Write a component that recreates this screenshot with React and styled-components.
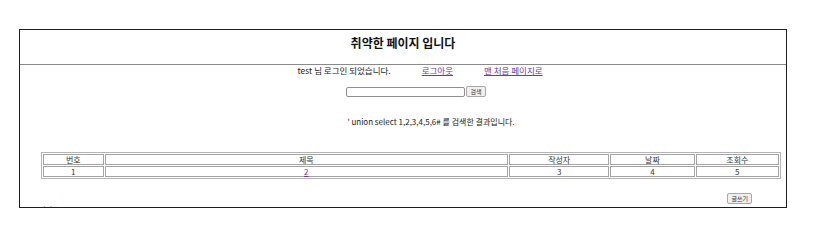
import styled, { createGlobalStyle } from 'styled-components';

const GlobalStyle = createGlobalStyle`
  body {
    margin: 0;
    background: #fff;
    font-family: 'Noto Sans CJK KR', 'Noto Sans', sans-serif;
    color: #222;
  }
`;

const Page = styled.div`
  padding: 29px 0 0 19px;
  height: 241px;
  box-sizing: border-box;
`;

const Frame = styled.div`
  width: 768px;
  height: 179px;
  box-sizing: border-box;
  border: 1px solid #1e1e1e;
  overflow: hidden;
`;

const Header = styled.div`
  height: 35px;
  box-sizing: border-box;
  border-bottom: 1px solid #8a8a8a;
  display: flex;
  justify-content: center;
  padding-top: 5px;
`;

const Title = styled.h1`
  margin: 0;
  font-size: 12px;
  font-weight: 700;
  line-height: 16px;
  color: #111;
`;

const LoginBar = styled.div`
  display: flex;
  justify-content: center;
  gap: 31px;
  margin-top: 0;
  font-size: 8.5px;
  line-height: 10px;
  padding-left: 34px;
`;

const Link = styled.a`
  color: #6a3c9e;
  text-decoration: underline;
`;

const SearchRow = styled.form`
  display: flex;
  justify-content: center;
  align-items: center;
  margin-top: 11px;
  padding-left: 26px;
`;

const SearchInput = styled.input`
  width: 119px;
  height: 10px;
  box-sizing: border-box;
  border: 1px solid #8f8f8f;
  border-radius: 2px;
  padding: 0;
  margin: 0;
`;

const SmallButton = styled.button`
  font-family: inherit;
  font-size: 6px;
  line-height: 9px;
  height: 11px;
  padding: 0 3px;
  margin: 0 0 0 1px;
  border: 1px solid #a8a8a8;
  border-radius: 2px;
  background: #efefef;
  color: #333;
`;

const Result = styled.p`
  margin: 20px 0 0;
  text-align: center;
  font-size: 8px;
  line-height: 10px;
  padding-left: 56px;
`;

const BoardTable = styled.table`
  margin: 25px 0 0 21px;
  width: 740px;
  border: 1px solid #b4b4b4;
  border-spacing: 1px;
  font-size: 8px;
  line-height: 9px;
`;

const Cell = styled.td`
  border: 1px solid #a4a4a4;
  text-align: center;
  padding: 0;
  width: ${(p) => p.$w}px;
  color: #333;
`;

const Footer = styled.div`
  display: flex;
  justify-content: flex-end;
  padding-right: 34px;
  margin-top: 14px;
`;

const Clipped = styled.div`
  font-size: 8px;
  line-height: 10px;
  margin-top: 1px;
  padding-left: 1px;
  color: #8a8a8a;
`;

const columns = [
  { label: '번호', w: 59, value: '1' },
  { label: '제목', w: 405, value: '2', link: true },
  { label: '작성자', w: 99, value: '3' },
  { label: '날짜', w: 83, value: '4' },
  { label: '조회수', w: 82, value: '5' },
];

export default function App() {
  return (
    <Page>
      <GlobalStyle />
      <Frame>
        <Header>
          <Title>취약한 페이지 입니다</Title>
        </Header>
        <LoginBar>
          <span>test 님 로그인 되었습니다.</span>
          <Link href="#">로그아웃</Link>
          <Link href="#">맨 처음 페이지로</Link>
        </LoginBar>
        <SearchRow onSubmit={(e) => e.preventDefault()}>
          <SearchInput />
          <SmallButton type="submit">검색</SmallButton>
        </SearchRow>
        <Result>' union select 1,2,3,4,5,6# 를 검색한 결과입니다.</Result>
        <BoardTable>
          <tbody>
            <tr>
              {columns.map((c) => (
                <Cell key={c.label} $w={c.w}>
                  {c.label}
                </Cell>
              ))}
            </tr>
            <tr>
              {columns.map((c) => (
                <Cell key={c.label} $w={c.w}>
                  {c.link ? <Link href="#">{c.value}</Link> : c.value}
                </Cell>
              ))}
            </tr>
          </tbody>
        </BoardTable>
        <Footer>
          <SmallButton>글쓰기</SmallButton>
        </Footer>
        <Clipped>Copyright 2020 ABCD</Clipped>
      </Frame>
    </Page>
  );
}
